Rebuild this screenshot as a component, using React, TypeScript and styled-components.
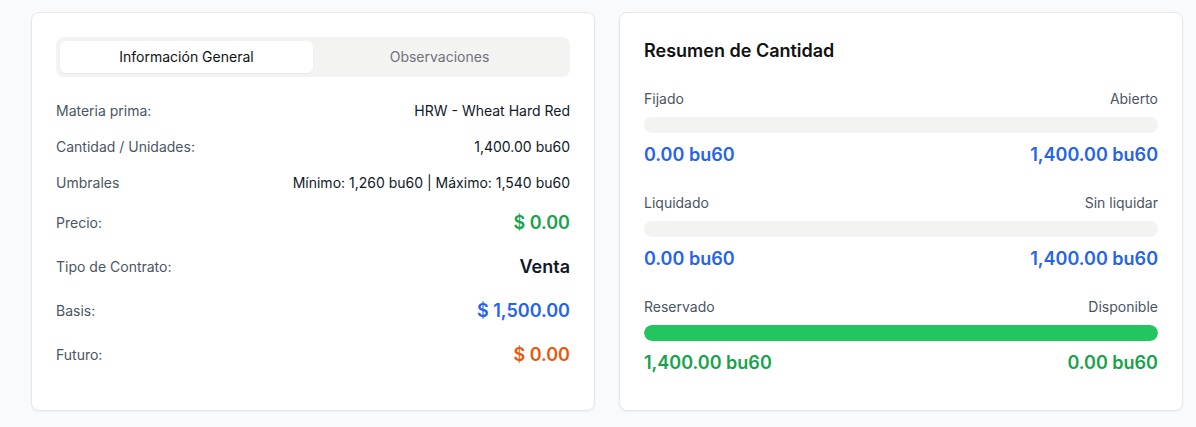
import React, { useState } from "react";
import styled, { createGlobalStyle } from "styled-components";

const Global = createGlobalStyle`
  html, body { margin: 0; padding: 0; background: #f9fafb; }
  body { font-family: Inter, "Noto Sans", "Liberation Sans", sans-serif; color: #111827; }
  * { box-sizing: border-box; }
`;

const Page = styled.div`
  display: grid;
  grid-template-columns: 564px 564px;
  gap: 24px;
  padding: 12px 13px 16px 31px;
`;

const Card = styled.section`
  background: #fff;
  border: 1px solid #e5e7eb;
  border-radius: 8px;
  box-shadow: 0 1px 2px rgba(0, 0, 0, 0.05);
  padding: 24px 24px 33px;
  display: flex;
  flex-direction: column;
`;

const TabList = styled.div`
  display: grid;
  grid-template-columns: 1fr 1fr;
  height: 40px;
  padding: 4px;
  border-radius: 8px;
  background: #f3f3f1;
`;

const Tab = styled.button<{ $active?: boolean }>`
  border: none;
  border-radius: 6px;
  font: inherit;
  font-size: 14px;
  font-weight: 400;
  line-height: 20px;
  cursor: pointer;
  background: ${(p) => (p.$active ? "#ffffff" : "transparent")};
  color: ${(p) => (p.$active ? "#111111" : "#71717a")};
  box-shadow: ${(p) => (p.$active ? "0 1px 2px rgba(0,0,0,0.05)" : "none")};
`;

const Rows = styled.div`
  margin-top: 16px;
  display: flex;
  flex-direction: column;
`;

const Row = styled.div`
  display: flex;
  justify-content: space-between;
  align-items: center;
  padding: 8px 0;
`;

const Label = styled.span`
  font-size: 14px;
  line-height: 20px;
  color: #4b5563;
`;

type Tone = "default" | "green" | "blue" | "orange" | "dark";
const toneColor: Record<Tone, string> = {
  default: "#111827",
  dark: "#111827",
  green: "#16a34a",
  blue: "#2563eb",
  orange: "#ea580c",
};

const Value = styled.span<{ $tone?: Tone; $big?: boolean }>`
  font-size: ${(p) => (p.$big ? "18px" : "14px")};
  line-height: ${(p) => (p.$big ? "28px" : "20px")};
  font-weight: ${(p) => (p.$big ? 600 : 400)};
  color: ${(p) => toneColor[p.$tone || "default"]};
`;

const Title = styled.h2`
  margin: 0 0 24px;
  font-size: 18px;
  line-height: 28px;
  font-weight: 600;
  color: #111111;
`;

const Groups = styled.div`
  display: flex;
  flex-direction: column;
  gap: 24px;
`;

const Group = styled.div`
  display: flex;
  flex-direction: column;
  gap: 8px;
`;

const Split = styled.div`
  display: flex;
  justify-content: space-between;
  align-items: center;
`;

const Track = styled.div`
  height: 16px;
  border-radius: 9999px;
  background: #f3f3f1;
  overflow: hidden;
`;

const Fill = styled.div<{ $color: string }>`
  height: 100%;
  border-radius: 9999px;
  background: ${(p) => p.$color};
`;

const Amount = styled.span<{ $tone: Tone }>`
  font-size: 18px;
  line-height: 28px;
  font-weight: 600;
  color: ${(p) => toneColor[p.$tone]};
`;

const details: { label: string; value: string; tone?: Tone; big?: boolean }[] = [
  { label: "Materia prima:", value: "HRW - Wheat Hard Red" },
  { label: "Cantidad / Unidades:", value: "1,400.00 bu60" },
  { label: "Umbrales", value: "Mínimo: 1,260 bu60 | Máximo: 1,540 bu60" },
  { label: "Precio:", value: "$ 0.00", tone: "green", big: true },
  { label: "Tipo de Contrato:", value: "Venta", tone: "dark", big: true },
  { label: "Basis:", value: "$ 1,500.00", tone: "blue", big: true },
  { label: "Futuro:", value: "$ 0.00", tone: "orange", big: true },
];

const summary: {
  left: string;
  right: string;
  leftVal: string;
  rightVal: string;
  pct: number;
  tone: Tone;
}[] = [
  { left: "Fijado", right: "Abierto", leftVal: "0.00 bu60", rightVal: "1,400.00 bu60", pct: 0, tone: "blue" },
  { left: "Liquidado", right: "Sin liquidar", leftVal: "0.00 bu60", rightVal: "1,400.00 bu60", pct: 0, tone: "blue" },
  { left: "Reservado", right: "Disponible", leftVal: "1,400.00 bu60", rightVal: "0.00 bu60", pct: 100, tone: "green" },
];

export default function App() {
  const [tab, setTab] = useState(0);
  return (
    <>
      <Global />
      <Page>
        <Card>
          <TabList>
            <Tab $active={tab === 0} onClick={() => setTab(0)}>
              Información General
            </Tab>
            <Tab $active={tab === 1} onClick={() => setTab(1)}>
              Observaciones
            </Tab>
          </TabList>
          <Rows>
            {details.map((d) => (
              <Row key={d.label}>
                <Label>{d.label}</Label>
                <Value $tone={d.tone} $big={d.big}>
                  {d.value}
                </Value>
              </Row>
            ))}
          </Rows>
        </Card>
        <Card>
          <Title>Resumen de Cantidad</Title>
          <Groups>
            {summary.map((s) => (
              <Group key={s.left}>
                <Split>
                  <Label>{s.left}</Label>
                  <Label>{s.right}</Label>
                </Split>
                <Track>
                  <Fill $color="#22c55e" style={{ width: `${s.pct}%` }} />
                </Track>
                <Split>
                  <Amount $tone={s.tone}>{s.leftVal}</Amount>
                  <Amount $tone={s.tone}>{s.rightVal}</Amount>
                </Split>
              </Group>
            ))}
          </Groups>
        </Card>
      </Page>
    </>
  );
}
